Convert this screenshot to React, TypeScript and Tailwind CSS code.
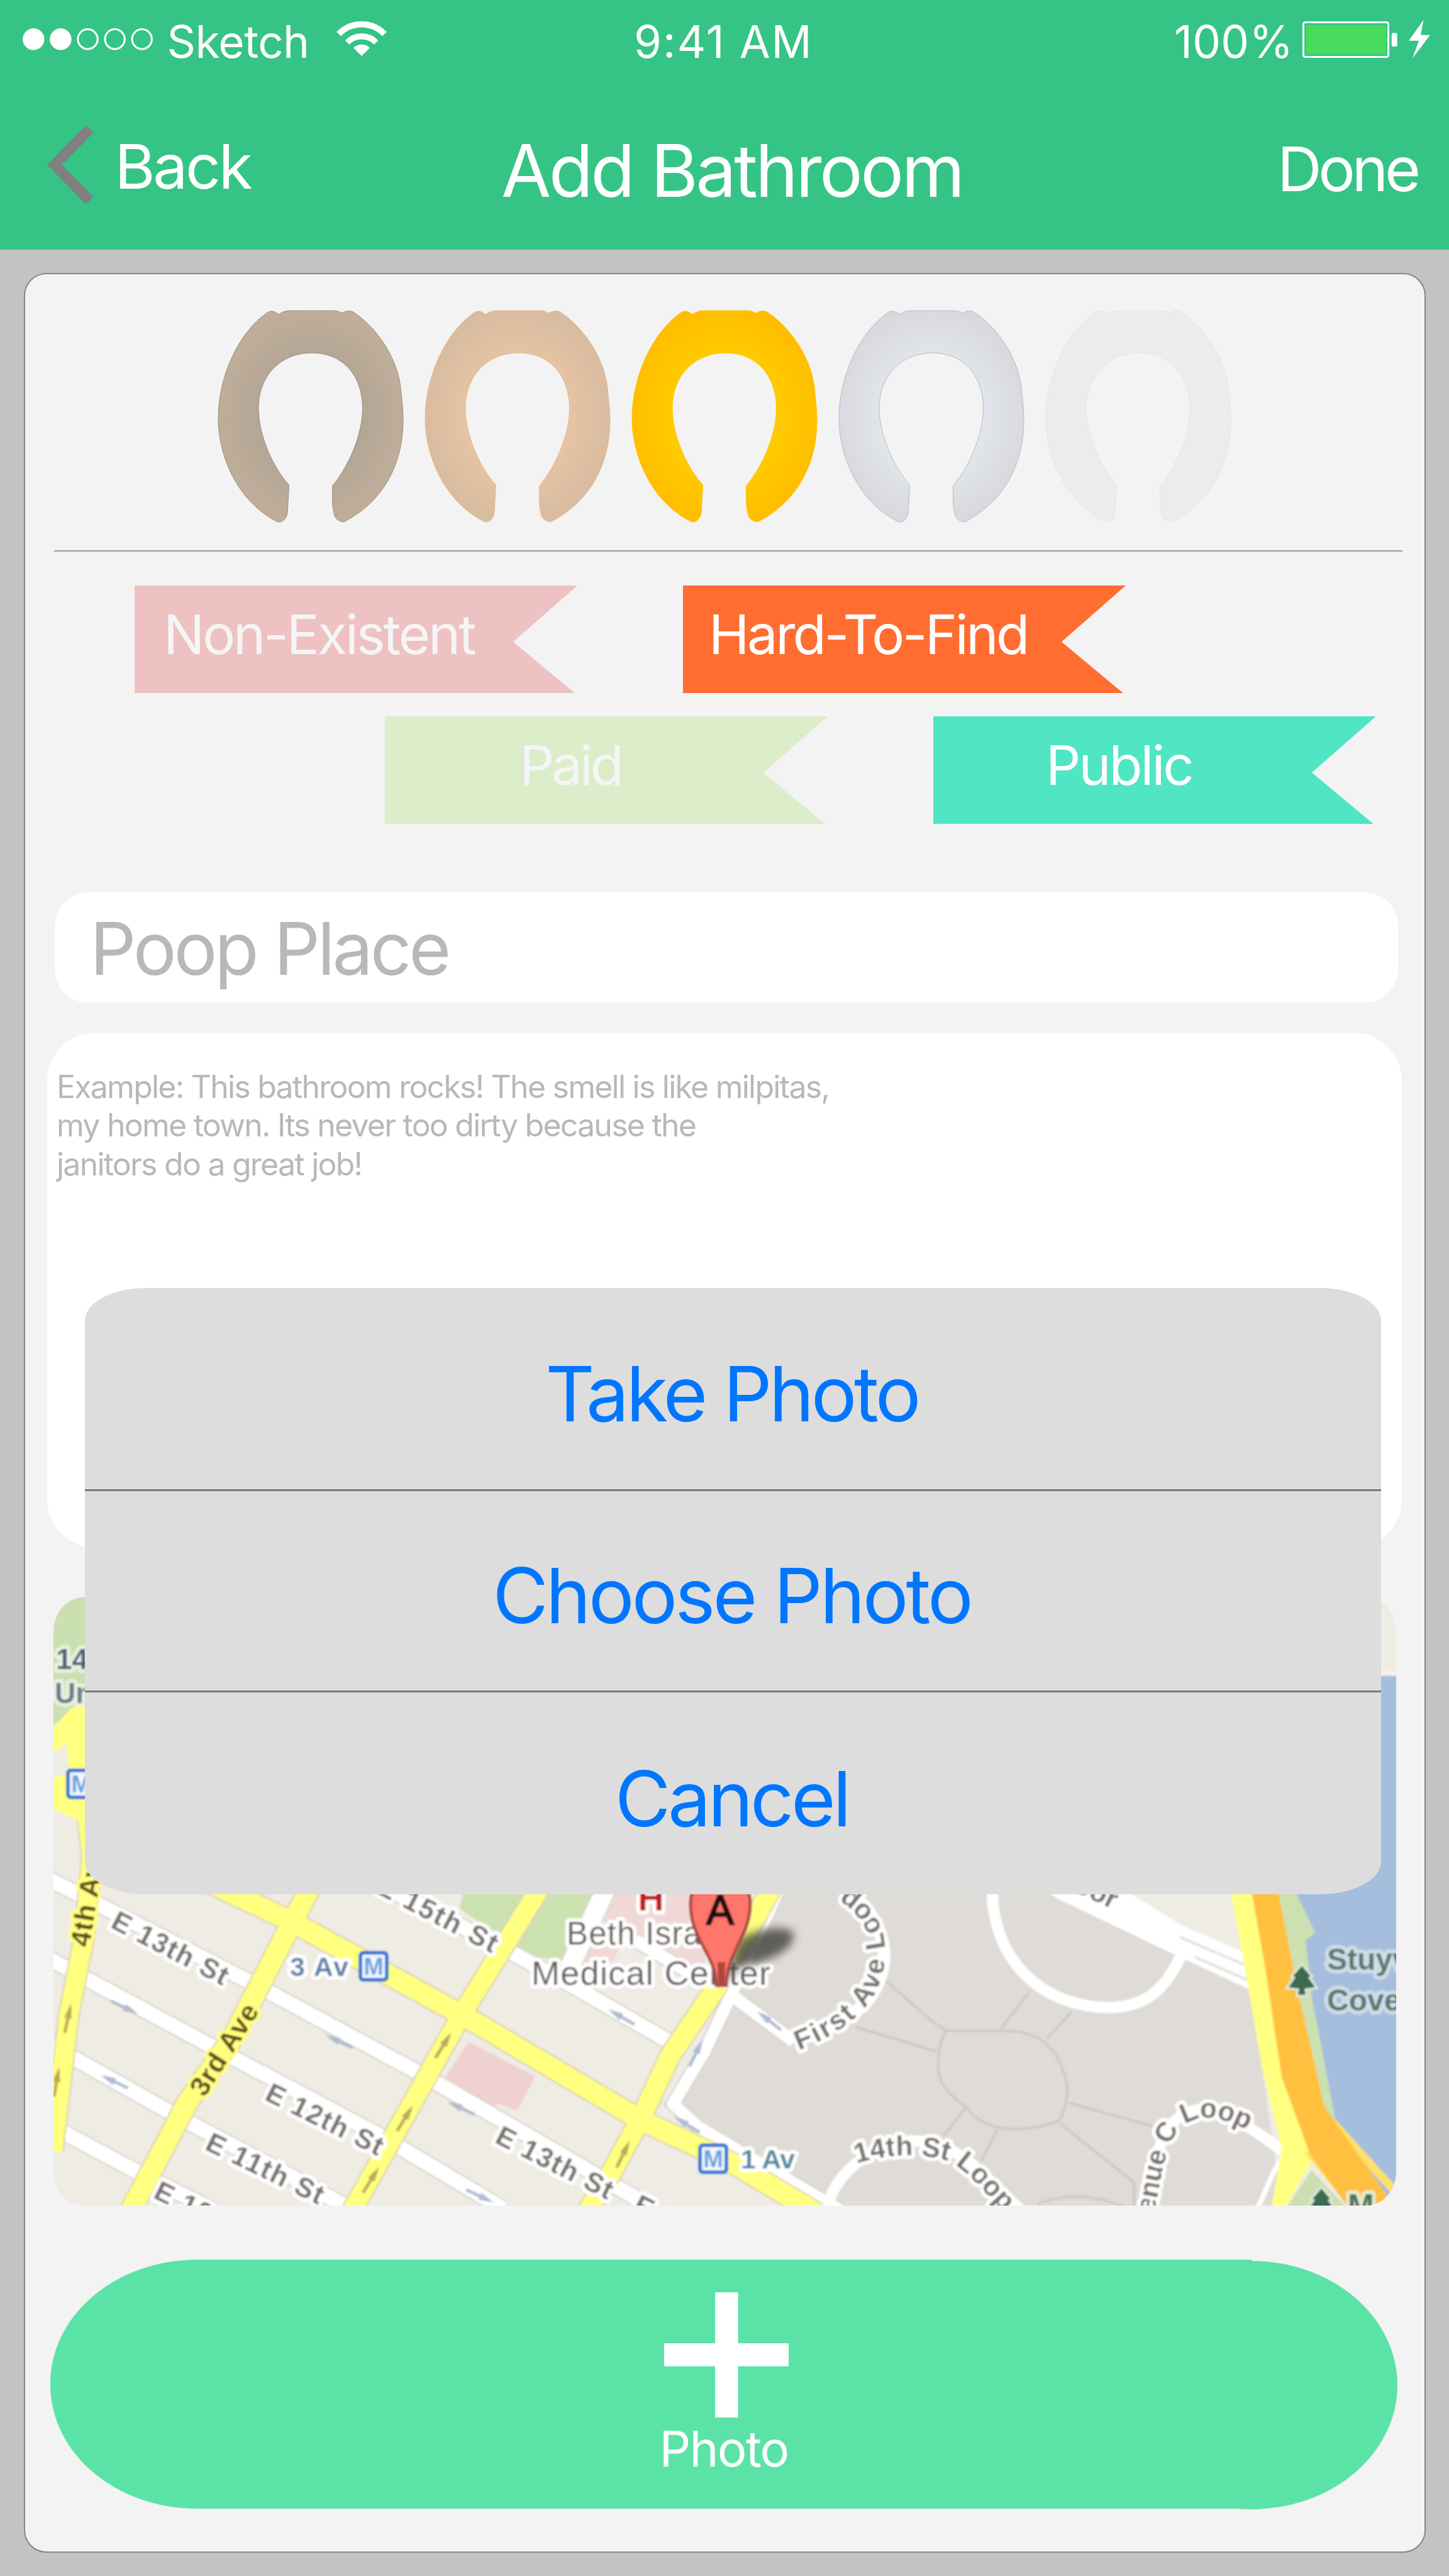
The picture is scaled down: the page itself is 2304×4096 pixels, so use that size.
import type { ReactNode } from "react";

/* ---------- status bar ---------- */

function SignalDots() {
  return (
    <svg className="mb-[7px] h-[35px] w-[207px]" viewBox="0 0 207 35">
      {[0, 1, 2, 3, 4].map((i) => (
        <circle
          key={i}
          cx={17.3 + i * 43.1}
          cy={17.3}
          r={i < 2 ? 17.2 : 15.7}
          fill={i < 2 ? "#fff" : "none"}
          stroke={i < 2 ? "none" : "#fff"}
          strokeWidth={3}
        />
      ))}
    </svg>
  );
}

function WifiIcon() {
  return (
    <svg className="mb-[9px] ml-[43px] h-[56px] w-[81px]" viewBox="0 0 81 56" fill="none" stroke="#fff">
      <path d="M3.6 20.1 A50.5 50.5 0 0 1 76.4 20.1" strokeWidth={9.6} />
      <path d="M17 33.5 A32 32 0 0 1 63 33.5" strokeWidth={9.4} />
      <path d="M40 55.1 L26.9 42 A18.7 18.7 0 0 1 53.1 42 Z" fill="#fff" stroke="none" />
    </svg>
  );
}

function BatteryIcon() {
  return (
    <svg className="mb-[9px] ml-[14px] h-[62px] w-[204px]" viewBox="0 0 204 62">
      <rect x={1.5} y={4.4} width={135.1} height={55.2} rx={3} fill="none" stroke="#fff" strokeWidth={3} />
      <rect x={5.1} y={8.9} width={127.9} height={46.3} fill="#48dc5e" />
      <rect x={141.8} y={21.4} width={8.8} height={21.5} rx={1.5} fill="#fff" />
      <path d="M192.5 0.5 L188.1 24.4 L202.8 24.7 L174.9 61.8 L185.1 33.8 L169 33.8 Z" fill="#fff" />
    </svg>
  );
}

function Header() {
  return (
    <header className="h-[397px] w-full bg-[#35c485] text-white">
      <div className="flex h-[132px] items-center whitespace-nowrap text-[71px] leading-[80px]">
        <div className="flex w-[1008px] items-center pl-[36px]">
          <SignalDots />
          <span className="ml-[22.6px] tracking-[-0.58px]">Sketch</span>
          <WifiIcon />
        </div>
        <span className="w-[859px] tracking-[1.97px]">9:41 AM</span>
        <span className="tracking-[0.35px]">100%</span>
        <BatteryIcon />
      </div>
      <div className="flex h-[265px] items-center whitespace-nowrap text-[98px] leading-[120px]">
        <div className="flex w-[797px] items-center pl-[74px]">
          <svg className="mb-[6px] h-[126px] w-[75px]" viewBox="0 0 75 126">
            <path d="M62.7 0 L74.4 11.9 L24.4 63 L74.4 114.1 L62.7 126 L0.9 63 Z" fill="#808080" />
          </svg>
          <span className="ml-[33.5px] tracking-[-3.3px]">Back</span>
        </div>
        <h1 className="w-[1234px] pt-[14px] text-[115px] leading-[130px] tracking-[-3.7px]">Add Bathroom</h1>
        <span className="pt-[8px] tracking-[-5.46px]">Done</span>
      </div>
    </header>
  );
}

/* ---------- rating ---------- */

const SEAT =
  "M205 0 H332 C342 0 350 6 357 15 C362 7 368 1 376 1 C384 1 389 7 392 11 C462 105 522 290 527 470 C531 540 533 590 533 630 C533 870 482 1090 365 1214 C362 1217 356 1217 350 1211 C337 1198 334 1180 333 1160 C330 1135 329 1110 329 1090 L329 1010 C382 880 416 700 416 562 C416 370 357 243 270 243 C182 243 116 370 116 562 C116 690 147 875 204 1004 L200 1150 C200 1180 192 1217 175 1217 C170 1217 168 1214 165 1210 C52 1090 0 830 0 622 C0 370 62 120 140 13 C144 7 149 3 153 3 C162 3 168 12 174 22 C182 10 192 0 205 0 Z";

const seats = [
  { id: "s1", inner: "#b0a394", outer: "#c1af9a", stroke: "#9c8d7c" },
  { id: "s2", inner: "#ebc7a5", outer: "#d5baa0", stroke: "#edb986" },
  { id: "s3", inner: "#ffd000", outer: "#ffbb00", stroke: "#ffc400" },
  { id: "s4", inner: "#e5e9ee", outer: "#d6d7dd", stroke: "#b4bac0" },
  { id: "s5", inner: "#ececec", outer: "#ececec", stroke: "#e4e4e4" },
];

function SeatRating() {
  return (
    <div className="ml-[307px] flex gap-[35px] pt-[58px]">
      {seats.map((s) => (
        <svg key={s.id} className="h-[336px] w-[294px] overflow-visible" viewBox="0 0 533 1217" preserveAspectRatio="none">
          <defs>
            <radialGradient id={s.id} cx="0.5" cy="0.5" r="0.56">
              <stop offset="0.35" stopColor={s.inner} />
              <stop offset="1" stopColor={s.outer} />
            </radialGradient>
          </defs>
          <path d={SEAT} fill={`url(#${s.id})`} stroke={s.stroke} strokeWidth={1} vectorEffect="non-scaling-stroke" />
        </svg>
      ))}
    </div>
  );
}

/* ---------- tags ---------- */

function Flag({ className, children }: { className: string; children: ReactNode }) {
  return (
    <div
      className={
        "flex h-[171px] w-[704px] items-center whitespace-nowrap pb-[15px] text-[86.7px] leading-[100px] [clip-path:polygon(0_0,100%_0,85.5%_52.4%,99.4%_100%,0_100%)] " +
        className
      }
    >
      {children}
    </div>
  );
}

/* ---------- map ---------- */

function MLogo({ x, y }: { x: number; y: number }) {
  return (
    <g>
      <rect x={x} y={y} width={42} height={43} rx={5} fill="#f1f6fd" stroke="#2f79d6" strokeWidth={6} />
      <text x={x + 21} y={y + 35} fontSize={38} fontWeight={700} textAnchor="middle" fill="#6aa0e2">M</text>
    </g>
  );
}

function Label({
  x, y, r = 0, len, size = 44, fill = "#77716d", halo = "#fff", bold = false, children,
}: {
  x: number; y: number; r?: number; len?: number; size?: number; fill?: string; halo?: string; bold?: boolean; children: string;
}) {
  return (
    <text
      transform={`translate(${x} ${y}) rotate(${r})`}
      fontSize={size}
      fontWeight={bold ? 700 : 400}
      textLength={len}
      fill={fill}
      stroke={halo}
      strokeWidth={12}
      strokeLinejoin="round"
      paintOrder="stroke"
    >
      {children}
    </text>
  );
}

const arrows: [number, number, number, string][] = [
  [198, 3192, 25, "#aebccf"],
  [539, 3246, 205, "#aebccf"],
  [182, 3310, 205, "#aebccf"],
  [733, 3352, 205, "#aebccf"],
  [763, 3492, 25, "#aebccf"],
  [988, 3207, 210, "#aebccf"],
  [1223, 3213, 218, "#aebccf"],
  [1107, 3264, -64, "#aebccf"],
  [1092, 3378, 212, "#aebccf"],
  [108, 3209, -78, "#b8ac58"],
  [90, 3310, -80, "#b8ac58"],
  [705, 3252, -58, "#b8ac58"],
  [644, 3368, -58, "#b8ac58"],
  [590, 3466, -58, "#b8ac58"],
  [991, 3425, -64, "#b8ac58"],
];

const streets: [string, number][] = [
  ["M70 2984 L164 3032 L416 3161 L677 3302 L795 3370 L1020 3500", 23],
  ["M70 3110 L318 3244 L610 3399 L800 3512", 23],
  ["M70 3246 L282 3365 L503 3482 L570 3520", 23],
  ["M70 3374 L221 3455 L340 3515", 23],
  ["M560 2975 L790 3092 L915 3160 L1070 3250", 23],
  ["M965 3000 L905 3130", 30],
  ["M1010 3085 L1085 3130 L1160 3170 L1262 3246", 20],
  ["M1240 3000 L1166 3165 L1120 3262 L1070 3345 L1110 3382 L1345 3520", 19],
];

const yellows: [string, number][] = [
  ["M134 2850 L146 2950 L134 3080 L110 3200 L84 3420", 30],
  ["M330 2992 L461 3054 L733 3203 L773 3226 L1019 3371 L1166 3440 L1300 3520", 32],
  ["M510 2970 L462 3061 L369 3242 L298 3343 L205 3520", 32],
  ["M866 2990 L733 3205 L557 3520", 30],
  ["M1234 2990 L1137 3163 L1066 3268 L1019 3368 L972 3455 L932 3520", 31],
];

function CityMap() {
  return (
    <svg
      className="ml-[45px] mt-[79px] h-[967px] w-[2135px] rounded-[48px/54px]"
      viewBox="85 2540 2135 967"
      fontFamily="'Liberation Sans', Arial, sans-serif"
    >
      <defs>
        <filter id="soft" x="0" y="0" width="1" height="1">
          <feGaussianBlur stdDeviation="1.8" />
        </filter>
        <filter id="shade" x="-0.5" y="-0.5" width="2" height="2">
          <feGaussianBlur stdDeviation="7" />
        </filter>
      </defs>
      <g filter="url(#soft)">
        <rect x={60} y={2520} width={2200} height={1010} fill="#efece4" />

        {/* parks and hospital grounds */}
        <path d="M60 2520 H200 V2700 L113 2722 L60 2760 Z" fill="#cbe0b0" />
        <path d="M738 3000 L731 3035 L780 3069 L850 3080 L838 3000 Z" fill="#cbe2b0" />
        <path d="M862 2995 H952 L896 3116 L853 3112 L818 3095 Z" fill="#cbe2b0" />
        <path d="M980 3000 H1110 L1130 3060 L1118 3135 L960 3058 Z" fill="#f0d8d6" />
        <path d="M934 3096 H985 L975 3120 L922 3120 Z" fill="#f0d8d6" />
        <path d="M745 3246 L851 3302 L822 3357 L793 3345 L774 3353 L706 3306 Z" fill="#efd1d0" />

        {/* housing estate east of First Avenue */}
        <path d="M1240 3000 L1166 3165 L1120 3262 L1078 3345 L1345 3520 H2040 L2007 3289 L1975 3000 Z" fill="#dfdbd6" />
        <path d="M1770 3000 H1965 L1984 3125 L1876 3080 Z" fill="#efece4" />

        {/* estate paths */}
        <g fill="none" stroke="#cdc9c3" strokeWidth={4}>
          <path d="M1505 3229 H1604 C1650 3232 1668 3250 1680 3270 C1694 3295 1700 3320 1696 3335 C1692 3362 1686 3370 1680 3374 C1640 3386 1610 3388 1589 3383 C1560 3378 1545 3362 1536 3350 C1500 3325 1490 3305 1492 3280 C1492 3255 1497 3240 1505 3229 Z" />
          <path d="M1636 3168 L1591 3226 M1704 3199 L1664 3242 M1698 3343 L1840 3383 M1685 3376 L1803 3470 V3510 M1536 3350 L1500 3397 M1586 3386 L1560 3437 M1407 3148 L1483 3215 L1505 3229 M1360 3223 L1490 3262 M1650 3504 C1690 3488 1740 3488 1790 3510" />
        </g>

        {/* white streets */}
        <g fill="none" stroke="#d9d5cd">
          {streets.map(([d, w]) => (
            <path key={d} d={d} strokeWidth={w + 5} />
          ))}
        </g>
        <g fill="none" stroke="#fff" strokeLinejoin="round">
          {streets.map(([d, w]) => (
            <path key={d} d={d} strokeWidth={w} />
          ))}
          <path d="M1341 3000 C1395 3040 1415 3090 1402 3137 C1390 3180 1360 3215 1262 3244" strokeWidth={20} />
          <path d="M1578 2990 C1572 3110 1650 3190 1762 3192 C1825 3192 1855 3160 1880 3105" strokeWidth={18} />
          <path d="M1318 3500 C1335 3450 1390 3408 1450 3404 C1530 3406 1560 3460 1630 3520" strokeWidth={18} />
          <path d="M1815 3520 C1840 3400 1860 3360 1905 3355 C1960 3360 2000 3390 2045 3424" strokeWidth={18} />
          <path d="M2045 3424 C2020 3455 2020 3470 2000 3510" strokeWidth={8} />
        </g>
        <path d="M1630 2985 L1780 3000 L1880 3062 L1980 3105 L1990 3165 L1876 3112 L1680 3018 Z" fill="#fff" />
        <path d="M1876 3080 L1988 3128 M1900 3112 L1988 3150" fill="none" stroke="#e2dfda" strokeWidth={4} />

        {/* avenues */}
        <g fill="none" stroke="#ddd3b4">
          {yellows.map(([d, w]) => (
            <path key={d} d={d} strokeWidth={w + 5} />
          ))}
        </g>
        <path d="M60 2775 L113 2716 L150 2705 V2950 L123 2894 L60 2864 V2833 L110 2820 L106 2772 L60 2805 Z" fill="#ffff80" />
        <g fill="none" stroke="#ffff80">
          {yellows.map(([d, w]) => (
            <path key={d} d={d} strokeWidth={w} />
          ))}
        </g>

        {/* river and FDR drive */}
        <path d="M2150 2662 H2240 V3530 H2200 L2122 3376 L2064 3168 L2040 3000 H2150 Z" fill="#a6bedd" />
        <path d="M2150 2660 H2240" stroke="#f4f1ee" strokeWidth={9} />
        <path d="M2030 3000 H2056 L2091 3073 L2076 3085 L2087 3182 L2126 3385 L2100 3370 Z" fill="#cde0b0" />
        <path d="M2040 3520 L2085 3450 L2150 3520 Z" fill="#cbe0b0" />
        <path d="M1954 2995 L1978 3122 L2007 3289 L2038 3417 L2020 3520 L2038 3520 L2084 3440 L2060 3330 L2005 2995 Z" fill="#ffff80" />
        <path d="M2080 3420 L2150 3505 M2120 3376 L2225 3492" stroke="#ffe066" strokeWidth={13} />
        <path d="M1987 2990 L2012 3130 L2038 3303 L2082 3423 L2150 3520 L2205 3520 L2205 3490 L2106 3350 L2064 3168 L2029 2990 Z" fill="#ffc040" />

        {/* one-way arrows */}
        {arrows.map(([x, y, r, c]) => (
          <g key={`${x}-${y}`} transform={`translate(${x} ${y}) rotate(${r})`} fill={c}>
            <rect x={-24} y={-2.5} width={40} height={5} />
            <path d="M0 -6 L24 0 L0 6 Z" />
          </g>
        ))}

        {/* street names */}
        <Label x={89} y={2654} fill="#4b5f78" halo="#e9f0df" size={46} bold>14 St</Label>
        <Label x={87} y={2708} fill="#67788d" halo="#e9f0df" size={46} bold>Union Sq</Label>
        <Label x={174} y={3064} r={27.5} len={203} bold>E 13th St</Label>
        <Label x={419} y={3338} r={26.5} len={203} bold>E 12th St</Label>
        <Label x={324} y={3417} r={26} len={203} bold>E 11th St</Label>
        <Label x={242} y={3494} r={26} len={203} bold>E 10th St</Label>
        <Label x={785} y={3406} r={27} len={203} bold>E 13th St</Label>
        <Label x={1004} y={3516} r={27} len={203} bold>E 14th St</Label>
        <Label x={596} y={3009} r={27.5} len={210} bold>E 15th St</Label>
        <Label x={1705} y={3006} r={25} bold>oor</Label>
        <Label x={142} y={3097} r={-81} len={160} size={44} fill="#5c4a18" halo="#ffff80" bold>4th Ave</Label>
        <Label x={325} y={3336} r={-57.6} len={164} size={44} fill="#5c4a18" halo="#ffff80" bold>3rd Ave</Label>
        <Label x={461} y={3142} len={93} size={43} fill="#5b80a6" bold>3 Av</Label>
        <MLogo x={573} y={3105} />
        <MLogo x={1113} y={3411} />
        <MLogo x={108} y={2815} />
        <Label x={1178} y={3448} len={86} size={43} fill="#4c88a2" bold>1 Av</Label>
        <Label x={901} y={3092} len={256} size={51} fill="#625c58">Beth Israel</Label>
        <Label x={845} y={3156} len={380} size={54} fill="#625c58">Medical Center</Label>
        <Label x={1014} y={3038} size={58} fill="#c4161c" bold>H</Label>
        <Label x={2110} y={3132} size={48} fill="#55796a" halo="#cfdde9" bold>Stuyvesant</Label>
        <Label x={2110} y={3197} size={48} fill="#55796a" halo="#cfdde9" bold>Cove</Label>
        <Label x={2143} y={3524} size={50} fill="#48715d" halo="#e6e9c8" bold>M</Label>

        <path id="firstLoop" d="M1270 3260 C1350 3230 1405 3180 1407 3112 C1410 3060 1385 3025 1335 2994" fill="none" />
        <path id="fourteenthLoop" d="M1362 3440 C1420 3422 1470 3425 1508 3436 C1535 3450 1555 3472 1620 3545" fill="none" />
        <path id="avenueLoop" d="M1835 3520 C1850 3450 1852 3392 1893 3373 C1925 3358 1965 3375 2010 3402" fill="none" />
        <g fontSize={44} fontWeight={700} fill="#77716d" stroke="#fff" strokeWidth={12} strokeLinejoin="round" paintOrder="stroke">
          <text textLength={345}><textPath href="#firstLoop">First Ave Loop</textPath></text>
          <text textLength={268}><textPath href="#fourteenthLoop">14th St Loop</textPath></text>
          <text textLength={258}><textPath href="#avenueLoop">enue C Loop</textPath></text>
        </g>

        {/* park trees */}
        {[[2070, 3152], [2101, 3506]].map(([x, y]) => (
          <path
            key={x}
            transform={`translate(${x} ${y})`}
            d="M0 -26 L14 -10 L10 -8 L21 8 L4 10 L6 20 L-6 20 L-4 10 L-21 8 L-10 -8 L-14 -10 Z"
            fill="#3a6b4d"
            stroke="#dbe8dc"
            strokeWidth={7}
            paintOrder="stroke"
          />
        ))}

        {/* pin */}
        <g filter="url(#shade)" fill="#4a4a44" opacity={0.85}>
          <path d="M1147 3157 L1175 3085 C1200 3065 1262 3058 1262 3078 C1260 3105 1215 3120 1175 3128 Z" />
        </g>
        <path
          d="M1139 3157 C1137 3105 1098 3085 1098 3028 C1098 2998 1118 2975 1145 2975 C1173 2975 1193 2998 1193 3028 C1193 3078 1155 3105 1155 3157 Z"
          fill="#ff766b"
          stroke="#a84a42"
          strokeWidth={5}
        />
        <path d="M1142 3157 L1141 3120 H1153 L1152 3157 Z" fill="#b0443b" />
        <text x={1145} y={3060} fontSize={66} textAnchor="middle" fill="#1b0f0e" stroke="#1b0f0e" strokeWidth={2.5}>A</text>
      </g>
    </svg>
  );
}

/* ---------- photo button and sheet ---------- */

function PhotoButton() {
  return (
    <button className="relative ml-[40px] mt-[85px] block h-[397px] w-[2142px] text-white">
      <div className="h-[396px] w-[1910px] rounded-l-[233px_197px] bg-[#5be3a7] [border-bottom-left-radius:233px_197px] [border-top-left-radius:233px_197px]" />
      <div className="absolute right-0 top-[3px] h-[395px] w-[465px] rounded-[50%] bg-[#5be3a7]" />
      <div className="absolute inset-0 flex flex-col items-center pt-[53px]">
        <svg className="ml-[8px] h-[199px] w-[198px]" viewBox="0 0 198 199">
          <path d="M81 0 H117.5 V81 H198 V117.5 H117.5 V199 H81 V117.5 H0 V81 H81 Z" fill="#fff" />
        </svg>
        <span className="mt-[10px] whitespace-nowrap text-[78px] leading-[80px] tracking-[-1.89px]">Photo</span>
      </div>
    </button>
  );
}

function PhotoSheet() {
  return (
    <div className="absolute left-[135px] top-[2048px] flex h-[964px] w-[2061px] flex-col divide-y-[3px] divide-[#7a7a7a] overflow-hidden rounded-[97px/52px] bg-[#ddd] text-[121.5px] leading-[140px] text-[#0076ff]">
      <div className="flex h-[323px] items-center justify-center pr-[4px] pt-[16px] tracking-[-4.8px]">Take Photo</div>
      <div className="flex h-[320px] items-center justify-center pr-[4px] pt-[14px] tracking-[-4.04px]">Choose Photo</div>
      <div className="flex h-[321px] items-center justify-center pr-[4px] pt-[17px] tracking-[-4.46px]">Cancel</div>
    </div>
  );
}

export default function App() {
  return (
    <div className="relative flex h-[4096px] w-[2304px] flex-col overflow-hidden bg-[#c3c3c3] font-['Inter',sans-serif]">
      <Header />
      <main className="ml-[38px] mt-[37px] h-[3625px] w-[2229px] rounded-[36px] border-2 border-[#868686] bg-[#f3f3f3]">
        <SeatRating />
        <div className="ml-[46px] mt-[45px] h-[2px] w-[2144px] bg-[#999]" />
        <div className="ml-[174px] mt-[54px] flex gap-[168px] text-white">
          <Flag className="bg-[#eec1c3] pl-[46px] tracking-[-3.15px] text-[#f5f5f5]">Non-Existent</Flag>
          <Flag className="bg-[#ff6d31] pl-[41px] tracking-[-3.48px]">Hard-To-Find</Flag>
        </div>
        <div className="ml-[572px] mt-[37px] flex gap-[168px] text-white">
          <Flag className="bg-[#dbedc9] pl-[214px] tracking-[-4.1px] text-[#f5f5f5]">Paid</Flag>
          <Flag className="bg-[#50e5c3] pl-[179px] tracking-[-3.08px]">Public</Flag>
        </div>
        <div className="ml-[47px] mt-[109px] flex h-[175px] w-[2136px] items-center rounded-[53px] bg-white pl-[56px] pt-[5px] text-[115px] leading-[130px] tracking-[-4.2px] text-[#b8b8b8]">
          Poop Place
        </div>
        <div className="ml-[35px] mt-[48px] h-[819px] w-[2154px] rounded-[77px] bg-white pl-[15px] pt-[56px] text-[50px] leading-[61.3px] tracking-[-1.77px] text-[#b8b8b8]">
          <p>
            Example: This bathroom rocks! The smell is like milpitas,
            <br />
            my home town. Its never too dirty because the
            <br />
            janitors do a great job!
          </p>
        </div>
        <CityMap />
        <PhotoButton />
      </main>
      <PhotoSheet />
    </div>
  );
}
